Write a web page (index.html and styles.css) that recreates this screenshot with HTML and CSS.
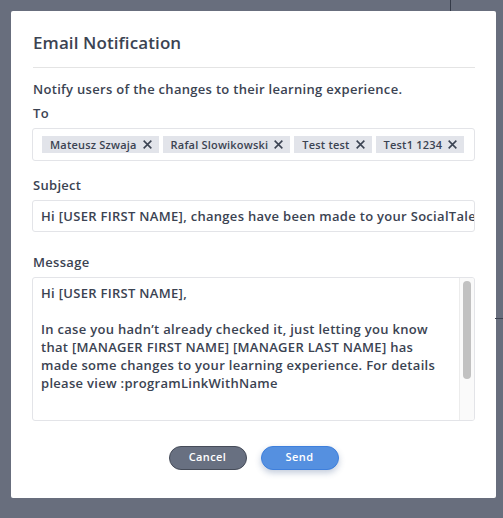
FILE: index.html
```html
<!DOCTYPE html>
<html>
<head>
<meta charset="utf-8">
<link rel="stylesheet" href="styles.css">
</head>
<body>
<div class="backdrop">
  <div class="modal">
    <h2 class="title">Email Notification</h2>
    <p class="intro">Notify users of the changes to their learning experience.</p>
    <div class="label">To</div>
    <div class="chips">
      <span class="chip">Mateusz Szwaja <svg class="x" viewBox="0 0 10 10"><path d="M1.5 1.5 8.5 8.5M8.5 1.5 1.5 8.5"/></svg></span>
      <span class="chip">Rafal Slowikowski <svg class="x" viewBox="0 0 10 10"><path d="M1.5 1.5 8.5 8.5M8.5 1.5 1.5 8.5"/></svg></span>
      <span class="chip">Test test <svg class="x" viewBox="0 0 10 10"><path d="M1.5 1.5 8.5 8.5M8.5 1.5 1.5 8.5"/></svg></span>
      <span class="chip">Test1 1234 <svg class="x" viewBox="0 0 10 10"><path d="M1.5 1.5 8.5 8.5M8.5 1.5 1.5 8.5"/></svg></span>
    </div>
    <div class="label label-gap">Subject</div>
    <div class="input"><span class="input-text">Hi [USER FIRST NAME], changes have been made to your SocialTalent learning experience</span></div>
    <div class="label label-gap2">Message</div>
    <div class="textarea">
      <div class="text">Hi [USER FIRST NAME],<br><br>In case you hadn’t already checked it, just letting you know that [MANAGER FIRST NAME] [MANAGER LAST NAME] has made some changes to your learning experience. For details please view :programLinkWithName</div>
      <div class="scroll"><div class="thumb"></div></div>
    </div>
    <div class="actions">
      <button class="btn cancel">Cancel</button>
      <button class="btn send">Send</button>
    </div>
  </div>
</div>
</body>
</html>
```
FILE: styles.css
```css
html, body {
  margin: 0;
  padding: 0;
}
body {
  background: #686e7d;
  width: 503px;
  height: 518px;
  overflow: hidden;
  font-family: "Open Sans", "Liberation Sans", sans-serif;
  color: #3b4352;
  letter-spacing: 0.3px;
}
.backdrop {
  position: relative;
  padding: 11px 8px 0 11px;
}
.backdrop::before {
  content: "";
  position: absolute;
  left: 450px;
  top: 0;
  width: 1px;
  height: 11px;
  background: #343a48;
}
.backdrop::after {
  content: "";
  position: absolute;
  left: 495px;
  top: 318px;
  width: 8px;
  height: 1px;
  background: #3d4352;
}
.modal {
  background: #fff;
  width: 442px;
  height: 467px;
  padding: 20px 21px 0 22px;
  border-radius: 2px;
}
.title {
  margin: 0;
  font-size: 17px;
  line-height: 24px;
  font-weight: 600;
  letter-spacing: 0.1px;
  padding-bottom: 12px;
  border-bottom: 1px solid #e4e4e4;
}
.intro {
  margin: 12px 0 0;
  font-size: 13px;
  line-height: 18px;
  font-weight: 600;
}
.label {
  margin-top: 6px;
  font-size: 13px;
  line-height: 18px;
  font-weight: 600;
}
.label-gap { margin-top: 15px; }
.label-gap2 { margin-top: 21px; }
.chips {
  margin-top: 6px;
  margin-left: -1px;
  border: 1px solid #e3e4e8;
  border-radius: 3px;
  padding: 7px 9px;
  box-sizing: border-box;
  height: 33px;
  display: flex;
  gap: 4px;
}
.chip {
  display: flex;
  align-items: center;
  gap: 5px;
  background: #e2e4ea;
  height: 17px;
  padding: 0 6px 0 8px;
  font-size: 11px;
  font-weight: 600;
  letter-spacing: 0.2px;
  white-space: nowrap;
}
.x {
  width: 11px;
  height: 11px;
  stroke: #3b4352;
  stroke-width: 1.4;
  fill: none;
}
.input {
  margin-top: 6px;
  margin-left: -1px;
  height: 32px;
  box-sizing: border-box;
  border: 1px solid #e3e4e8;
  border-radius: 3px;
  padding: 0 8px;
  font-size: 13px;
  line-height: 30px;
  font-weight: 600;
  white-space: nowrap;
  overflow: hidden;
  text-overflow: clip;
}
.textarea {
  margin-top: 6px;
  margin-left: -1px;
  height: 144px;
  box-sizing: border-box;
  border: 1px solid #e3e4e8;
  border-radius: 3px;
  display: flex;
  overflow: hidden;
}
.text {
  flex: 1;
  padding: 6px 8px;
  font-size: 13px;
  line-height: 18px;
  font-weight: 600;
}
.scroll {
  width: 15px;
  background: #fafafa;
  border-left: 1px solid #ececec;
  padding: 3px 3px 0 3px;
  box-sizing: border-box;
}
.thumb {
  height: 98px;
  background: #c1c1c1;
  border-radius: 4px;
}
.actions {
  margin-top: 25px;
  display: flex;
  justify-content: center;
  gap: 14px;
  padding-right: 1px;
}
.btn {
  width: 78px;
  height: 24px;
  border-radius: 12px;
  font-family: inherit;
  font-size: 11px;
  font-weight: 600;
  letter-spacing: 0.4px;
  color: #fff;
  padding: 0 0 3px;
}
.cancel {
  background: #687081;
  border: 1px solid #464c59;
}
.send {
  background: #5590e0;
  border: 1px solid #3e7fdc;
  box-shadow: 0 3px 6px rgba(60, 90, 140, 0.3);
}
```
